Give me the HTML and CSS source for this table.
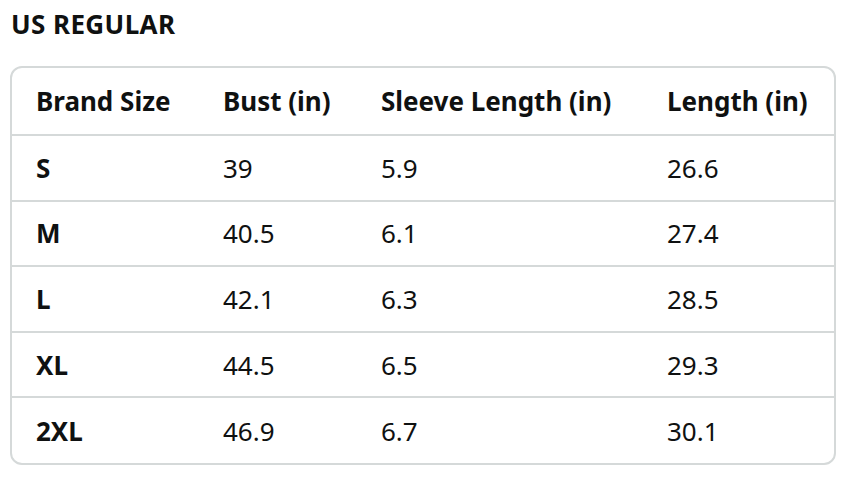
FILE: index.html
```html
<!DOCTYPE html>
<html>
<head>
<meta charset="utf-8">
<link rel="stylesheet" href="styles.css">
</head>
<body>
<h2 class="title">US REGULAR</h2>
<div class="card">
  <table class="sizes">
    <colgroup>
      <col class="c1"><col class="c2"><col class="c3"><col class="c4">
    </colgroup>
    <thead>
      <tr><th>Brand Size</th><th>Bust (in)</th><th>Sleeve Length (in)</th><th>Length (in)</th></tr>
    </thead>
    <tbody>
      <tr><th>S</th><td>39</td><td>5.9</td><td>26.6</td></tr>
      <tr><th>M</th><td>40.5</td><td>6.1</td><td>27.4</td></tr>
      <tr><th>L</th><td>42.1</td><td>6.3</td><td>28.5</td></tr>
      <tr><th>XL</th><td>44.5</td><td>6.5</td><td>29.3</td></tr>
      <tr><th>2XL</th><td>46.9</td><td>6.7</td><td>30.1</td></tr>
    </tbody>
  </table>
</div>
</body>
</html>
```
FILE: styles.css
```css
html, body { margin: 0; padding: 0; background: #fff; }
body {
  font-family: "Noto Sans", "Open Sans", sans-serif;
  color: #0f1111;
  padding: 8px 14px 0 10px;
}
.title {
  margin: 0 0 0 1px;
  font-size: 26px;
  font-weight: 700;
  letter-spacing: 0.4px;
  line-height: 32px;
  height: 58px;
}
.card {
  width: 822px;
  border: 2px solid #d5d9d9;
  border-radius: 12px;
  overflow: hidden;
}
.sizes {
  width: 100%;
  border-collapse: collapse;
  table-layout: fixed;
}
.c1 { width: 187px; }
.c2 { width: 158px; }
.c3 { width: 286px; }
.c4 { width: auto; }
.sizes th, .sizes td {
  text-align: left;
  padding: 0 0 0 24px;
  font-size: 26px;
  white-space: nowrap;
}
.sizes th { font-weight: 700; }
.sizes td { font-weight: 400; }
.sizes thead tr { height: 67px; }
.sizes tbody tr { height: 65.6px; border-top: 2px solid #d5d9d9; }
```
